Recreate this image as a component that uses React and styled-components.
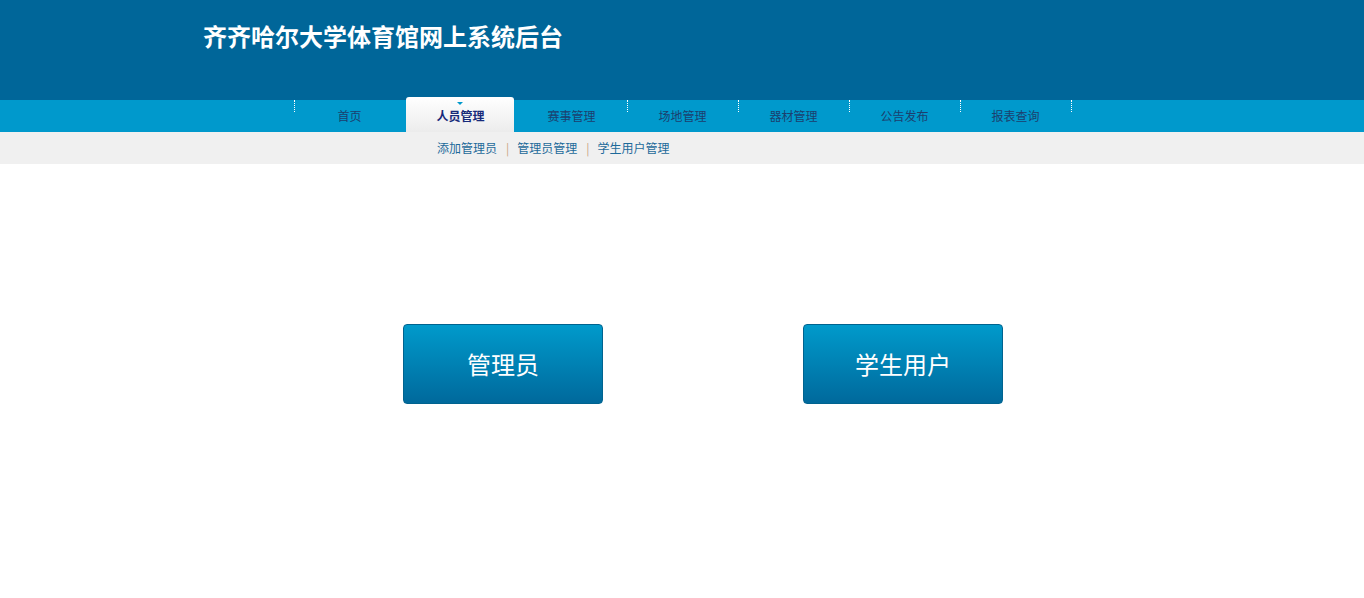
import React from "react";
import styled, { createGlobalStyle } from "styled-components";

const Global = createGlobalStyle`
  html, body { margin: 0; padding: 0; background: #fff; }
  body { font-family: "Microsoft YaHei", "Noto Sans CJK SC", "Liberation Sans", sans-serif; }
  * { box-sizing: border-box; }
`;

const Header = styled.header`
  height: 100px;
  background: #006699;
`;

const Container = styled.div`
  width: 960px;
  margin: 0 auto;
`;

const Title = styled.h1`
  margin: 0;
  padding-top: 20px;
  padding-left: 1px;
  font-size: 24px;
  line-height: 32px;
  font-weight: bold;
  color: #fff;
`;

const NavBar = styled.nav`
  height: 32px;
  background: #0099cc;
`;

const NavList = styled.ul`
  list-style: none;
  margin: 0 auto;
  padding: 0 0 0 2px;
  display: flex;
  width: 780px;
  height: 32px;
`;

const NavItem = styled.li`
  width: 111px;
  height: 32px;
  position: relative;
  display: flex;
  align-items: center;
  justify-content: center;
  padding-bottom: 1px;
  font-size: 12px;
  color: ${(p) => (p.$active ? "#172a7a" : "#1c3f6e")};
  font-weight: ${(p) => (p.$active ? "bold" : "normal")};
  &::before {
    content: "";
    display: ${(p) => (p.$noSep ? "none" : "block")};
    position: absolute;
    left: 0;
    top: 0;
    height: 12px;
    border-left: 1px dotted #fff;
  }
  &:last-child::after {
    content: "";
    position: absolute;
    left: 111px;
    top: 0;
    height: 12px;
    border-left: 1px dotted #fff;
  }
`;

const ActiveTab = styled.div`
  position: absolute;
  left: 1px;
  right: 2px;
  top: -3px;
  bottom: 0;
  background: linear-gradient(#ffffff, #ececec);
  border-radius: 3px 3px 0 0;
  z-index: 1;
  &::after {
    content: "";
    position: absolute;
    left: 50%;
    top: 5px;
    margin-left: -3px;
    border-left: 3px solid transparent;
    border-right: 3px solid transparent;
    border-top: 3px solid #0099cc;
  }
`;

const NavLabel = styled.span`
  position: relative;
  z-index: 2;
`;

const SubNav = styled.div`
  height: 32px;
  background: #f0f0f0;
`;

const SubList = styled.div`
  display: flex;
  align-items: center;
  height: 32px;
  padding-left: 235px;
  padding-bottom: 2px;
  font-size: 12px;
`;

const SubLink = styled.a`
  color: #1d6a9a;
  text-decoration: none;
`;

const Sep = styled.span`
  color: #c9a585;
  margin: 0 8px 0 9px;
`;

const Main = styled.main`
  padding-top: 160px;
`;

const ButtonRow = styled.div`
  display: flex;
  gap: 200px;
  padding-left: 201px;
`;

const BigButton = styled.button`
  width: 200px;
  height: 80px;
  border: 1px solid #00638f;
  border-radius: 4px;
  background: linear-gradient(#009acb, #00699c);
  color: #fff;
  font-size: 24px;
  font-family: inherit;
  padding: 0 0 2px;
  cursor: pointer;
`;

const navItems = ["首页", "人员管理", "赛事管理", "场地管理", "器材管理", "公告发布", "报表查询"];
const activeIndex = 1;

export default function App() {
  return (
    <>
      <Global />
      <Header>
        <Container>
          <Title>齐齐哈尔大学体育馆网上系统后台</Title>
        </Container>
      </Header>
      <NavBar>
        <NavList>
          {navItems.map((t, i) => (
            <NavItem
              key={t}
              $active={i === activeIndex}
              $noSep={i === activeIndex || i === activeIndex + 1}
            >
              {i === activeIndex && <ActiveTab />}
              <NavLabel>{t}</NavLabel>
            </NavItem>
          ))}
        </NavList>
      </NavBar>
      <SubNav>
        <Container>
          <SubList>
            <SubLink href="#">添加管理员</SubLink>
            <Sep>|</Sep>
            <SubLink href="#">管理员管理</SubLink>
            <Sep>|</Sep>
            <SubLink href="#">学生用户管理</SubLink>
          </SubList>
        </Container>
      </SubNav>
      <Main>
        <Container>
          <ButtonRow>
            <BigButton>管理员</BigButton>
            <BigButton>学生用户</BigButton>
          </ButtonRow>
        </Container>
      </Main>
    </>
  );
}
